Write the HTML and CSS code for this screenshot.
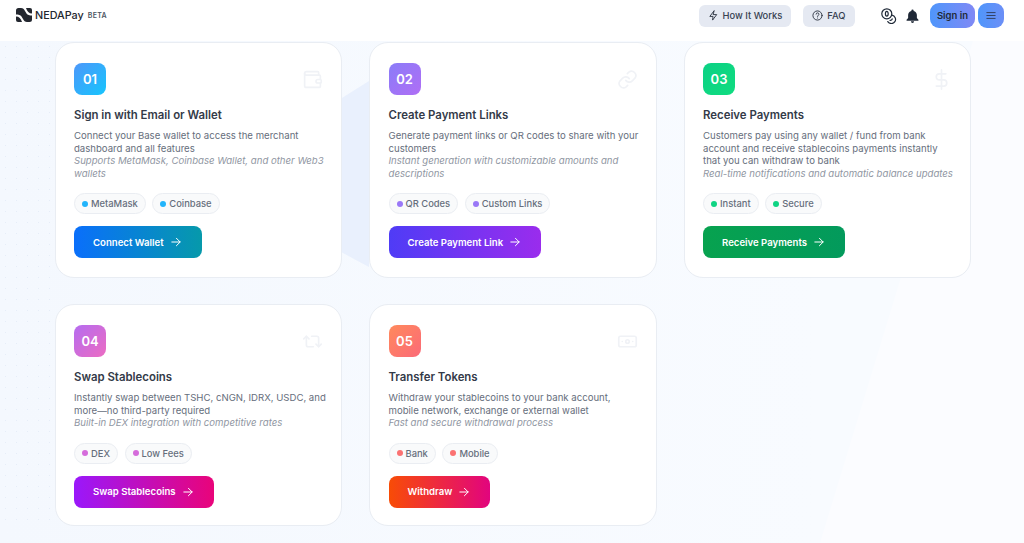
FILE: index.html
```html
<!DOCTYPE html>
<html lang="en">
<head>
    <meta charset="UTF-8">
    <meta name="viewport" content="width=device-width, initial-scale=1.0">
    <title>NEDAPay</title>
    <link rel="stylesheet" href="styles.css">
</head>
<body>

<header class="header">
    <div class="brand">
        <svg class="logo" viewBox="0 0 16 14" width="16" height="14">
            <path d="M10 0h4a2 2 0 0 1 2 2v3.5C13 5.5 11 3.5 10 0z"/>
            <path d="M0 8.5C3 8.5 5 10.5 6 14H2a2 2 0 0 1-2-2z"/>
            <path d="M0 2.5A2.5 2.5 0 0 1 2.5 0H5C7 0 8 1.2 9 3l1.5 2.5C11.500 7 13.500 7.500 16 7.500V11.500A2.500 2.500 0 0 1 13.500 14H11C9 14 8 12.800 7 11L5.500 8.500C4.500 7 2.500 6.500 0 6.500Z"/>
        </svg>
        <span class="brand-name">NEDAPay</span>
        <span class="brand-tag">BETA</span>
    </div>
    <nav class="nav">
        <a class="nav-pill">
            <svg viewBox="0 0 24 24" width="11" height="11" class="line-icon"><path d="M13 2 4 14h7l-1 8 9-12h-7z"/></svg>
            How It Works
        </a>
        <a class="nav-pill nav-pill-faq">
            <svg viewBox="0 0 24 24" width="11" height="11" class="line-icon"><circle cx="12" cy="12" r="10"/><path d="M9 9a3 3 0 0 1 6 .6c0 2-3 2.4-3 4.4M12 17.5v.1"/></svg>
            FAQ
        </a>
        <svg class="coins" viewBox="0 0 16 16" width="16" height="16">
            <circle cx="5.8" cy="5.8" r="5"/>
            <ellipse cx="5.8" cy="5.8" rx="1.4" ry="2.4"/>
            <path d="M11 7.2a4.2 4.2 0 1 1-4.2 6.4"/>
            <path d="M9 12.3c1 .2 2-.3 2.2-1.500"/>
        </svg>
        <svg class="bell" viewBox="0 0 24 24" width="15" height="16">
            <path d="M12 1.5a1.8 1.8 0 0 0-1.800 1.800v.5C7 4.600 5 7.400 5 10.500v4.500L2.500 18v1.500h19V18L19 15v-4.500c0-3.100-2-5.900-5.200-6.700v-.5A1.800 1.800 0 0 0 12 1.500zM9.500 20.500a2.500 2.500 0 0 0 5 0z"/>
        </svg>
        <button class="sign-in">Sign in</button>
        <button class="menu-btn">
            <svg viewBox="0 0 12 10" width="10" height="9"><path d="M1 1.5h10M1 5h10M1 8.5h10"/></svg>
        </button>
    </nav>
</header>

<main class="page">
    <div class="dots"></div>
    <svg class="backdrop" viewBox="0 0 1024 502" preserveAspectRatio="none">
        <path d="M300 82 Q335 62 369 40 V226 Q335 208 300 188 Z" fill="#e9f0fd"/>
        <path d="M973 0 H1024 V502 H820 Z" fill="#fbfcff"/>
    </svg>

    <div class="card-grid">
        <section class="card">
            <div class="card-top">
                <div class="step step-blue">01</div>
                <svg class="ghost-icon" viewBox="0 0 24 24" width="21" height="21"><path d="M19 7V4a1 1 0 0 0-1-1H5a2 2 0 0 0 0 4h15a1 1 0 0 1 1 1v4h-3a2 2 0 0 0 0 4h3a1 1 0 0 0 1-1v-2a1 1 0 0 0-1-1"/><path d="M3 5v14a2 2 0 0 0 2 2h15a1 1 0 0 0 1-1v-4"/></svg>
            </div>
            <h3>Sign in with Email or Wallet</h3>
            <p>Connect your Base wallet to access the merchant dashboard and all features</p>
            <p class="note">Supports MetaMask, Coinbase Wallet, and other Web3 wallets</p>
            <div class="tags">
                <span class="tag"><i class="dot dot-blue"></i>MetaMask</span>
                <span class="tag"><i class="dot dot-blue"></i>Coinbase</span>
            </div>
            <a class="cta cta-blue">Connect Wallet <svg class="arrow" viewBox="0 0 12 12" width="10" height="10"><path d="M1 6h10M6.5 1.5 11 6l-4.5 4.5"/></svg></a>
        </section>

        <section class="card">
            <div class="card-top">
                <div class="step step-violet">02</div>
                <svg class="ghost-icon" viewBox="0 0 24 24" width="21" height="21"><path d="M10 13a5 5 0 0 0 7.5.5l3-3a5 5 0 0 0-7-7l-1.7 1.7"/><path d="M14 11a5 5 0 0 0-7.5-.5l-3 3a5 5 0 0 0 7 7l1.7-1.7"/></svg>
            </div>
            <h3>Create Payment Links</h3>
            <p>Generate payment links or QR codes to share with your customers</p>
            <p class="note">Instant generation with customizable amounts and descriptions</p>
            <div class="tags">
                <span class="tag"><i class="dot dot-violet"></i>QR Codes</span>
                <span class="tag"><i class="dot dot-violet"></i>Custom Links</span>
            </div>
            <a class="cta cta-violet">Create Payment Link <svg class="arrow" viewBox="0 0 12 12" width="10" height="10"><path d="M1 6h10M6.5 1.5 11 6l-4.5 4.5"/></svg></a>
        </section>

        <section class="card">
            <div class="card-top">
                <div class="step step-green">03</div>
                <svg class="ghost-icon" viewBox="0 0 24 24" width="21" height="21"><path d="M12 1v22M17 5.5H9.5a3.5 3.5 0 0 0 0 7h5a3.5 3.5 0 0 1 0 7H6"/></svg>
            </div>
            <h3>Receive Payments</h3>
            <p>Customers pay using any wallet / fund from bank account and receive stablecoins payments instantly that you can withdraw to bank</p>
            <p class="note">Real-time notifications and automatic balance updates</p>
            <div class="tags">
                <span class="tag"><i class="dot dot-green"></i>Instant</span>
                <span class="tag"><i class="dot dot-green"></i>Secure</span>
            </div>
            <a class="cta cta-green">Receive Payments <svg class="arrow" viewBox="0 0 12 12" width="10" height="10"><path d="M1 6h10M6.5 1.5 11 6l-4.5 4.5"/></svg></a>
        </section>

        <section class="card">
            <div class="card-top">
                <div class="step step-pink">04</div>
                <svg class="ghost-icon" viewBox="0 0 24 24" width="21" height="21"><path d="m2 9 3-3 3 3"/><path d="M13 18H7a2 2 0 0 1-2-2V6"/><path d="m22 15-3 3-3-3"/><path d="M11 6h6a2 2 0 0 1 2 2v10"/></svg>
            </div>
            <h3>Swap Stablecoins</h3>
            <p>Instantly swap between TSHC, cNGN, IDRX, USDC, and more—no third-party required</p>
            <p class="note">Built-in DEX integration with competitive rates</p>
            <div class="tags">
                <span class="tag"><i class="dot dot-pink"></i>DEX</span>
                <span class="tag"><i class="dot dot-pink"></i>Low Fees</span>
            </div>
            <a class="cta cta-pink">Swap Stablecoins <svg class="arrow" viewBox="0 0 12 12" width="10" height="10"><path d="M1 6h10M6.5 1.5 11 6l-4.5 4.5"/></svg></a>
        </section>

        <section class="card">
            <div class="card-top">
                <div class="step step-orange">05</div>
                <svg class="ghost-icon" viewBox="0 0 24 24" width="21" height="21"><rect x="2" y="6" width="20" height="12" rx="2"/><circle cx="12" cy="12" r="2"/><path d="M6 12h.01M18 12h.01"/></svg>
            </div>
            <h3>Transfer Tokens</h3>
            <p>Withdraw your stablecoins to your bank account, mobile network, exchange or external wallet</p>
            <p class="note">Fast and secure withdrawal process</p>
            <div class="tags">
                <span class="tag"><i class="dot dot-orange"></i>Bank</span>
                <span class="tag"><i class="dot dot-orange"></i>Mobile</span>
            </div>
            <a class="cta cta-orange">Withdraw <svg class="arrow" viewBox="0 0 12 12" width="10" height="10"><path d="M1 6h10M6.5 1.5 11 6l-4.5 4.5"/></svg></a>
        </section>
    </div>
</main>

</body>
</html>
```

FILE: styles.css
```css
/* Base */
html, body {
    margin: 0;
    padding: 0;
    height: 543px;
    overflow: hidden;
}

body {
    font-family: 'Inter', sans-serif;
    background: linear-gradient(90deg, #f4f8fe, #f8fbff 80%);
    color: #2b3240;
}

/* Header */
.header {
    height: 41px;
    background-color: #fff;
    display: flex;
    align-items: center;
    justify-content: space-between;
    padding: 0 20px 0 16px;
    box-sizing: border-box;
}

.brand {
    display: flex;
    align-items: center;
    margin-top: -11px;
}

.logo {
    fill: #23272f;
}

.brand-name {
    margin-left: 3px;
    font-size: 10.8px;
    font-weight: 500;
    color: #23272f;
}

.brand-tag {
    margin-left: 4px;
    font-size: 7px;
    font-weight: 600;
    letter-spacing: 0.3px;
    color: #4b5563;
}

.nav {
    display: flex;
    align-items: center;
    margin-top: -10px;
}

.nav-pill {
    display: flex;
    align-items: center;
    gap: 4px;
    height: 22px;
    padding: 0 8.5px;
    margin-right: 12px;
    border-radius: 6px;
    background-color: #e5e9f2;
    font-size: 9.4px;
    font-weight: 500;
    color: #374151;
}

.nav-pill-faq {
    padding: 0 9.5px;
}

.line-icon {
    fill: none;
    stroke: #2b3240;
    stroke-width: 2;
    stroke-linecap: round;
    stroke-linejoin: round;
}

.coins {
    margin-left: 14px;
    fill: none;
    stroke: #1f2937;
    stroke-width: 1.2;
    stroke-linecap: round;
}

.bell {
    margin-left: 8px;
    fill: #1f2937;
}

.sign-in {
    margin-left: 10px;
    width: 45px;
    height: 25px;
    border: none;
    border-radius: 9px;
    padding: 0;
    background: linear-gradient(90deg, #4f96fb, #8089f5);
    font-family: inherit;
    font-size: 9.5px;
    font-weight: 600;
    color: #1f2937;
}

.menu-btn {
    margin-left: 3px;
    width: 26px;
    height: 25px;
    border: none;
    border-radius: 9px;
    padding: 0;
    background: linear-gradient(90deg, #4f96fb, #6c8ff7);
    display: flex;
    align-items: center;
    justify-content: center;
}

.menu-btn path {
    fill: none;
    stroke: #2f3a58;
    stroke-width: 1.1;
    stroke-linecap: round;
}

/* Page + background shapes */
.page {
    position: relative;
    height: 502px;
}

.backdrop {
    position: absolute;
    left: 0;
    top: 0;
    width: 1024px;
    height: 502px;
}

.dots {
    position: absolute;
    left: 0;
    top: 0;
    width: 60px;
    height: 480px;
    background-image: radial-gradient(#e6edf8 0.7px, transparent 0.8px);
    background-size: 11px 11px;
}

.card-grid {
    position: relative;
    display: grid;
    grid-template-columns: repeat(3, 287.5px);
    grid-template-rows: 236px 222px;
    column-gap: 27px;
    row-gap: 26px;
    padding: 1px 0 0 54.5px;
}

/* Cards */
.card {
    background-color: #fff;
    border: 1px solid #e9edf3;
    border-radius: 19px;
    padding: 20px 14px 0 18.5px;
    box-sizing: border-box;
}

.card-top {
    display: flex;
    align-items: center;
    justify-content: space-between;
    height: 32px;
    margin-bottom: 13px;
}

.step {
    width: 32px;
    height: 32px;
    border-radius: 8px;
    display: flex;
    align-items: center;
    justify-content: center;
    color: #fff;
    font-size: 13px;
    font-weight: 600;
}

.step-blue { background: linear-gradient(135deg, #4d97fa, #16c5fd); }
.step-violet { background: linear-gradient(135deg, #8a7cf8, #b06ef5); }
.step-green { background: linear-gradient(135deg, #0bd184, #10dc80); }
.step-pink { background: linear-gradient(135deg, #b56cf0, #ec6cc2); }
.step-orange { background: linear-gradient(135deg, #ff8a5c, #fb6a78); }

.ghost-icon {
    fill: none;
    stroke: #f0f2f6;
    stroke-width: 1.9;
    stroke-linecap: round;
    stroke-linejoin: round;
    margin-right: 4px;
}

h3 {
    margin: 0 0 8px;
    font-size: 11.4px;
    line-height: 14px;
    font-weight: 600;
    color: #333a48;
}

.card p {
    margin: 0;
    font-size: 9.6px;
    line-height: 12.5px;
    color: #666e7c;
}

.card p.note {
    font-style: italic;
    color: #8f96a2;
}

.tags {
    display: flex;
    gap: 6.5px;
    margin-top: 13px;
}

.tag {
    display: flex;
    align-items: center;
    gap: 3px;
    height: 21px;
    padding: 0 7px;
    box-sizing: border-box;
    border: 1px solid #eaedf2;
    border-radius: 11px;
    background-color: #f9fafb;
    font-size: 9.4px;
    font-weight: 500;
    color: #666e7c;
}

.dot {
    width: 6px;
    height: 6px;
    border-radius: 50%;
}

.dot-blue { background-color: #22b4fb; }
.dot-violet { background-color: #9a78f7; }
.dot-green { background-color: #0fd483; }
.dot-pink { background-color: #d56cdb; }
.dot-orange { background-color: #fb7272; }

/* Buttons */
.cta {
    display: inline-flex;
    align-items: center;
    gap: 7px;
    height: 32px;
    padding: 0 21px 0 19px;
    margin-top: 12px;
    border-radius: 8px;
    font-size: 9.6px;
    font-weight: 600;
    color: #fff;
}

.arrow {
    fill: none;
    stroke: #fff;
    stroke-width: 1.2;
    stroke-linecap: round;
    stroke-linejoin: round;
}

.cta-blue { background: linear-gradient(90deg, #0a6ffb, #0699ab); }
.cta-violet { background: linear-gradient(90deg, #4f3cf6, #9a2ced); }
.cta-green { background: linear-gradient(90deg, #07a24f, #039a5c); }
.cta-pink { background: linear-gradient(90deg, #9a18fb, #e9047a); }
.cta-orange { background: linear-gradient(90deg, #f84c06, #e2047e); }
```
